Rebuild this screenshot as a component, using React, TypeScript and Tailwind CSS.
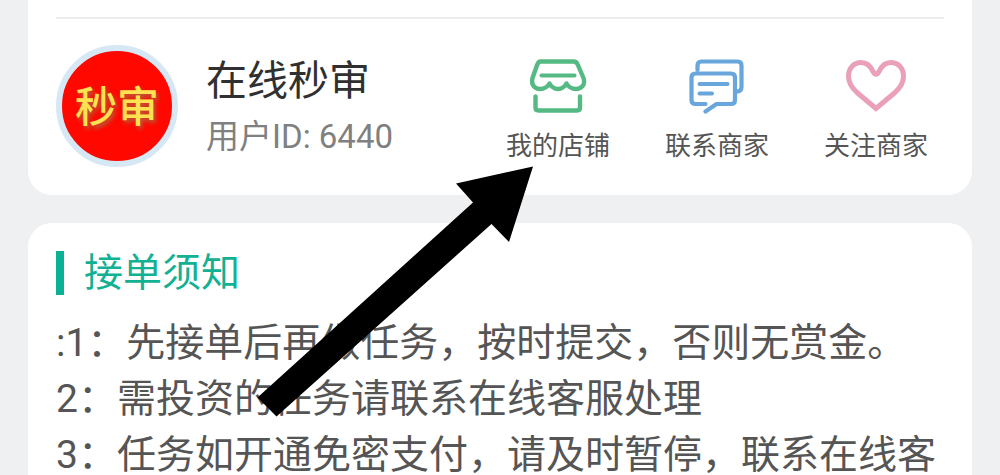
import type { ReactNode } from "react";

function StoreIcon() {
  return (
    <svg viewBox="0 0 60 56" className="h-14 w-15" fill="none" stroke="#55b983" strokeWidth="4.4" strokeLinecap="round" strokeLinejoin="round" aria-hidden="true">
      <path d="M12.500 3.500H45.500Q48.500 3.500 49.700 6.500L55.500 20C58 27.500 52.500 31 48 31C43.500 31 40.500 29 38.500 25.500C36.500 29 33.500 31 30 31C26.500 31 23.500 29 21.500 25.500C19.500 29 16.500 31 12 31C7 31 2.500 27 4.500 20L9.300 6.500Q10.500 3.500 12.500 3.500Z" />
      <path d="M13.500 17.500H46.500" strokeWidth="4" />
      <path d="M7.500 38.500V49.500Q7.500 52.500 10.500 52.500H49Q52 52.500 52 49.500V38.500" />
    </svg>
  );
}

function ChatIcon() {
  return (
    <svg viewBox="0 0 60 56" className="h-14 w-15" fill="none" stroke="#68a6dc" strokeWidth="4.2" strokeLinecap="round" strokeLinejoin="round" aria-hidden="true">
      <path d="M10.500 12V7.500Q10.500 3.500 14.500 3.500H50.500Q54.500 3.500 54.500 7.500V29Q54.500 33 50.500 33.500" />
      <path d="M18.500 46H8.500Q4.500 46 4.500 42V19.500Q4.500 15.500 8.500 15.500H44Q48 15.500 48 19.500V42Q48 46 44 46H29.500L18.500 53.500" />
      <path d="M12.500 26H40.500M12.500 35.500H25" strokeWidth="4" />
    </svg>
  );
}

function HeartIcon() {
  return (
    <svg viewBox="0 0 64 56" className="h-14 w-16" fill="none" stroke="#e9a0b8" strokeWidth="5" strokeLinejoin="miter" aria-hidden="true">
      <path d="M32 50.500L13 34.500C7 29 4.500 25 4.500 18.500C4.500 10 10 4.500 17 4.500C24 4.500 27 9 29 13.500Q32 19 35 13.500C37 9 40.500 4.500 47 4.500C54 4.500 59.500 10 59.500 18.500C59.500 25 57 29 51 34.500Z" />
    </svg>
  );
}

const actions: { label: string; icon: ReactNode }[] = [
  { label: "我的店铺", icon: <StoreIcon /> },
  { label: "联系商家", icon: <ChatIcon /> },
  { label: "关注商家", icon: <HeartIcon /> },
];

const notices = [
  ":1：先接单后再做任务，按时提交，否则无赏金。",
  "2：需投资的任务请联系在线客服处理",
  "3：任务如开通免密支付，请及时暂停，联系在线客",
];

function Pointer() {
  return (
    <svg viewBox="0 0 276 251" className="pointer-events-none absolute top-[166px] left-[257px] h-[251px] w-[276px]" aria-hidden="true">
      <path d="M276 0.500L199 17.500L216 36.500L0.500 231.500L19.500 250.500L234.500 58L252 76Z" fill="#000" />
    </svg>
  );
}

export default function App() {
  return (
    <div className="relative min-h-screen bg-[#eff0f2] px-7 font-[Roboto,'Noto_Sans_CJK_SC',sans-serif]">
      <section className="rounded-b-3xl bg-white px-7 pt-[17px] pb-7">
        <hr className="border-t-2 border-[#ececec]" />
        <div className="flex items-center pt-[26px]">
          <div className="flex size-[122px] shrink-0 items-center justify-center rounded-full border-[6px] border-[#d5e8f4] bg-[#fe0800] pt-1">
            <span className="text-[42px] leading-none font-medium whitespace-nowrap text-[#fde151] [text-shadow:2px_3px_4px_#b0643c]">秒审</span>
          </div>
          <div className="ml-7 flex flex-col pt-0.5 whitespace-nowrap">
            <h1 className="text-[41px] leading-[60px] text-[#303030]">在线秒审</h1>
            <p className="text-[33px] leading-[52px] text-[#808080]">用户ID: 6440</p>
          </div>
          <div className="mr-4 ml-auto flex gap-[55px]">
            {actions.map(({ label, icon }) => (
              <button key={label} type="button" className="flex flex-col items-center gap-3 pt-3">
                {icon}
                <span className="text-[26px] leading-10 whitespace-nowrap text-[#555]">{label}</span>
              </button>
            ))}
          </div>
        </div>
      </section>

      <section className="mt-7 rounded-t-3xl bg-white px-7 pt-7">
        <h2 className="flex items-center gap-5 text-[39px] leading-[44px] text-[#12b193]">
          <span className="h-11 w-2 bg-[#0bb193]" />
          接单须知
        </h2>
        <div className="pt-5 text-[39px] leading-[56px] text-[#555]">
          {notices.map((notice) => (
            <p key={notice} className="whitespace-nowrap">{notice}</p>
          ))}
        </div>
      </section>

      <Pointer />
    </div>
  );
}
